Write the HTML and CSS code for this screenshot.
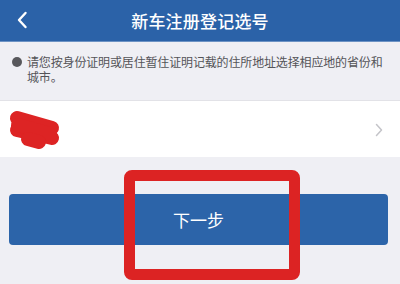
FILE: index.html
```html
<!DOCTYPE html>
<html lang="zh">
<head>
<meta charset="utf-8">
<link rel="stylesheet" href="styles.css">
</head>
<body>
<header class="bar">
  <span class="back">
    <svg width="12" height="18" viewBox="0 0 12 18"><path d="M9.5 2 L3 9 L9.5 16" fill="none" stroke="#fff" stroke-width="2.4" stroke-linecap="round" stroke-linejoin="round"/></svg>
  </span>
  <h1 class="title">新车注册登记选号</h1>
</header>
<div class="notice">
  <span class="dot"></span>
  <p class="notice-text">请您按身份证明或居住暂住证明记载的住所地址选择相应地的省份和城市。</p>
</div>
<div class="row">
  <svg class="scribble" width="62" height="56" viewBox="0 0 62 56">
    <g fill="none" stroke="#dd2424" stroke-width="14" stroke-linecap="round" stroke-linejoin="round">
      <path d="M17 17 L52 27"/>
      <path d="M17 29 L52 37"/>
      <path d="M18 24 L50 33"/>
      <path d="M28 38 L39 41"/>
    </g>
  </svg>
  <svg class="chev" width="8" height="14" viewBox="0 0 8 14"><path d="M1.5 1.5 L6.5 7 L1.5 12.5" fill="none" stroke="#c4c4c9" stroke-width="1.5" stroke-linecap="round" stroke-linejoin="round"/></svg>
</div>
<div class="actions">
  <button class="next">下一步</button>
</div>
<div class="mark"></div>
</body>
</html>
```
FILE: styles.css
```css
html, body {
  margin: 0;
  padding: 0;
}
body {
  width: 400px;
  height: 284px;
  background: #efeff4;
  font-family: "Noto Sans CJK SC", "Noto Sans", sans-serif;
  overflow: hidden;
  position: relative;
}
.bar {
  height: 41px;
  background: #2b62a8;
  border-bottom: 1px solid #6d93c4;
  display: flex;
  align-items: center;
  justify-content: center;
  position: relative;
}
.back {
  position: absolute;
  left: 16px;
  top: 11px;
  display: flex;
}
.title {
  margin: 0;
  color: #fff;
  font-size: 17px;
  font-weight: 500;
  letter-spacing: 0.2px;
}
.notice {
  display: flex;
  align-items: flex-start;
  padding: 12px 8px 0 12px;
  height: 46px;
}
.dot {
  flex: none;
  width: 10px;
  height: 10px;
  border-radius: 50%;
  background: #58585c;
  margin-top: 3px;
  margin-right: 5px;
}
.notice-text {
  margin: 0;
  font-size: 12px;
  line-height: 15px;
  color: #545458;
  letter-spacing: -0.15px;
}
.row {
  background: #fff;
  border-top: 1px solid #e2e2e7;
  display: flex;
  align-items: center;
  justify-content: space-between;
  padding: 0 17px 0 0;
  box-sizing: border-box;
  height: 57px;
}
.scribble {
  display: block;
}
.chev {
  display: block;
  margin-top: 1px;
}
.actions {
  padding: 37px 12px 0 9px;
}
.next {
  width: 100%;
  height: 51px;
  border: none;
  border-radius: 4px;
  background: #2c64a9;
  color: #fff;
  font-family: "Noto Sans CJK SC", "Noto Sans", sans-serif;
  font-size: 17px;
  padding: 0;
  display: block;
}
.mark {
  position: absolute;
  left: 124px;
  top: 170px;
  width: 176px;
  height: 110px;
  box-sizing: border-box;
  border: 11px solid #dc2323;
  border-radius: 8px;
}
```
